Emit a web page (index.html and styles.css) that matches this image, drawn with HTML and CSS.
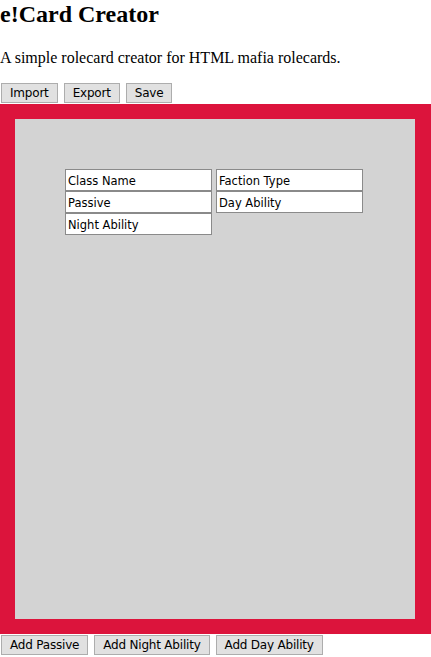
FILE: index.html
```html
<!DOCTYPE html>
<html>
<head>
<meta charset="utf-8">
<title>e!Card Creator</title>
<link rel="stylesheet" href="styles.css">
</head>
<body>
<h2 class="title">e!Card Creator</h2>
<p class="intro">A simple rolecard creator for HTML mafia rolecards.</p>
<div class="toolbar">
  <button class="btn">Import</button>
  <button class="btn">Export</button>
  <button class="btn">Save</button>
</div>
<div class="frame">
  <div class="canvas">
    <div class="card">
      <div class="col">
        <input class="field" value="Class Name">
        <input class="field" value="Passive">
        <input class="field" value="Night Ability">
      </div>
      <div class="col">
        <input class="field" value="Faction Type">
        <input class="field" value="Day Ability">
      </div>
    </div>
  </div>
</div>
<div class="toolbar bottom">
  <button class="btn">Add Passive</button>
  <button class="btn">Add Night Ability</button>
  <button class="btn">Add Day Ability</button>
</div>
</body>
</html>
```
FILE: styles.css
```css
html, body {
  margin: 0;
  padding: 0;
  background: #ffffff;
}
body {
  font-family: "Liberation Serif", "Times New Roman", serif;
  color: #000;
}
.title {
  font-size: 24px;
  font-weight: bold;
  margin: 0 0 20px 0;
  line-height: 28px;
}
.intro {
  font-size: 16px;
  margin: 0 0 16px 0;
  line-height: 19px;
}
.toolbar {
  display: flex;
  gap: 6px;
  padding-left: 1px;
  height: 20px;
  margin-bottom: 1px;
}
.toolbar.bottom {
  margin-top: 1px;
}
.btn {
  font-family: "DejaVu Sans", Verdana, sans-serif;
  font-size: 12px;
  letter-spacing: -0.2px;
  color: #000;
  background: #e1e1e1;
  border: 1px solid #adadad;
  border-radius: 0;
  padding: 0 8px;
  height: 20px;
  line-height: 18px;
  margin: 0;
}
.frame {
  background: #dc143c;
  padding: 15px 16px 15px 15px;
}
.canvas {
  background: #d3d3d3;
  width: 400px;
  height: 500px;
  box-sizing: border-box;
  padding: 50px;
}
.card {
  display: flex;
  gap: 4px;
  align-items: flex-start;
}
.col {
  display: flex;
  flex-direction: column;
}
.field {
  font-family: "DejaVu Sans", Verdana, sans-serif;
  font-size: 11.5px;
  color: #000;
  width: 147px;
  height: 22px;
  box-sizing: border-box;
  border: 1px solid #8a8a8a;
  padding: 1px 2px 0 2px;
  margin: 0;
  background: #fff;
  outline: none;
}
```
